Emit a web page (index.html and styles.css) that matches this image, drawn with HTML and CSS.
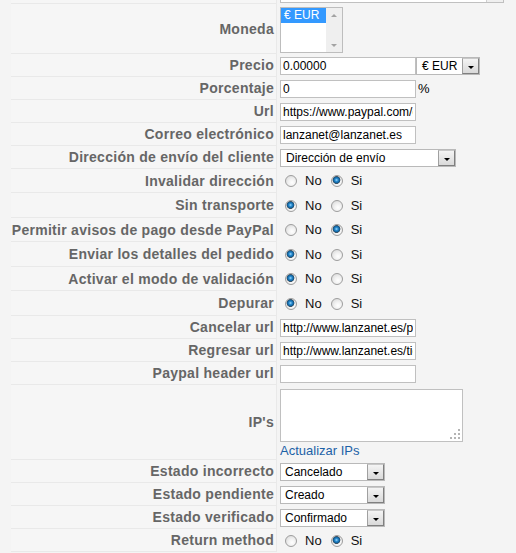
FILE: index.html
```html
<!DOCTYPE html>
<html lang="es">

<head>
    <meta charset="UTF-8">
    <meta name="viewport" content="width=device-width, initial-scale=1.0">
    <title>PayPal - Parámetros</title>
    <link rel="stylesheet" href="styles.css">
</head>

<body>

    <div class="admintable">

        <div class="row r-top">
            <div class="key"></div>
            <div class="val"><div class="cut-select"><span class="cut-btn"></span></div></div>
        </div>

        <div class="row r-moneda">
            <div class="key">Moneda</div>
            <div class="val">
                <div class="listbox">
                    <div class="lb-opts"><div class="lb-opt sel">€ EUR</div></div>
                    <div class="lb-scroll"><span class="up"></span><span class="down"></span></div>
                </div>
            </div>
        </div>

        <div class="row">
            <div class="key">Precio</div>
            <div class="val">
                <input class="text" type="text" value="0.00000">
                <div class="select s-cur"><span class="s-text">€ EUR</span><span class="dd"></span></div>
            </div>
        </div>

        <div class="row">
            <div class="key">Porcentaje</div>
            <div class="val"><input class="text" type="text" value="0"><span class="unit">%</span></div>
        </div>

        <div class="row">
            <div class="key">Url</div>
            <div class="val"><input class="text" type="text" value="https://www.paypal.com/cgi-bin/webscr"></div>
        </div>

        <div class="row">
            <div class="key">Correo electrónico</div>
            <div class="val"><input class="text" type="text" value="lanzanet@lanzanet.es"></div>
        </div>

        <div class="row">
            <div class="key">Dirección de envío del cliente</div>
            <div class="val"><div class="select s-dir"><span class="s-text">Dirección de envío</span><span class="dd"></span></div></div>
        </div>

        <div class="row r-radio r24">
            <div class="key">Invalidar dirección</div>
            <div class="val">
                <label class="opt"><input type="radio" name="r1"> No</label>
                <label class="opt"><input type="radio" name="r1" checked> Si</label>
            </div>
        </div>

        <div class="row r-radio r25">
            <div class="key">Sin transporte</div>
            <div class="val">
                <label class="opt"><input type="radio" name="r2" checked> No</label>
                <label class="opt"><input type="radio" name="r2"> Si</label>
            </div>
        </div>

        <div class="row r-radio r24">
            <div class="key">Permitir avisos de pago desde PayPal</div>
            <div class="val">
                <label class="opt"><input type="radio" name="r3"> No</label>
                <label class="opt"><input type="radio" name="r3" checked> Si</label>
            </div>
        </div>

        <div class="row r-radio r25">
            <div class="key">Enviar los detalles del pedido</div>
            <div class="val">
                <label class="opt"><input type="radio" name="r4" checked> No</label>
                <label class="opt"><input type="radio" name="r4"> Si</label>
            </div>
        </div>

        <div class="row r-radio r24">
            <div class="key">Activar el modo de validación</div>
            <div class="val">
                <label class="opt"><input type="radio" name="r5" checked> No</label>
                <label class="opt"><input type="radio" name="r5"> Si</label>
            </div>
        </div>

        <div class="row r-radio r25">
            <div class="key">Depurar</div>
            <div class="val">
                <label class="opt"><input type="radio" name="r6" checked> No</label>
                <label class="opt"><input type="radio" name="r6"> Si</label>
            </div>
        </div>

        <div class="row">
            <div class="key">Cancelar url</div>
            <div class="val"><input class="text" type="text" value="http://www.lanzanet.es/pago-cancelado"></div>
        </div>

        <div class="row">
            <div class="key">Regresar url</div>
            <div class="val"><input class="text" type="text" value="http://www.lanzanet.es/tienda"></div>
        </div>

        <div class="row">
            <div class="key">Paypal header url</div>
            <div class="val"><input class="text" type="text" value=""></div>
        </div>

        <div class="row r-ips">
            <div class="key">IP's</div>
            <div class="val">
                <div class="ta-wrap">
                    <textarea class="ips"></textarea>
                    <svg class="grip" width="11" height="11" viewBox="0 0 11 11">
                        <rect x="8" y="0" width="2" height="2" fill="#b4b4b4"/>
                        <rect x="4" y="4" width="2" height="2" fill="#b4b4b4"/>
                        <rect x="8" y="4" width="2" height="2" fill="#b4b4b4"/>
                        <rect x="0" y="8" width="2" height="2" fill="#b4b4b4"/>
                        <rect x="4" y="8" width="2" height="2" fill="#b4b4b4"/>
                        <rect x="8" y="8" width="2" height="2" fill="#b4b4b4"/>
                    </svg>
                </div>
                <a class="link" href="#">Actualizar IPs</a>
            </div>
        </div>

        <div class="row">
            <div class="key">Estado incorrecto</div>
            <div class="val"><div class="select s-est"><span class="s-text">Cancelado</span><span class="dd"></span></div></div>
        </div>

        <div class="row">
            <div class="key">Estado pendiente</div>
            <div class="val"><div class="select s-est"><span class="s-text">Creado</span><span class="dd"></span></div></div>
        </div>

        <div class="row">
            <div class="key">Estado verificado</div>
            <div class="val"><div class="select s-est"><span class="s-text">Confirmado</span><span class="dd"></span></div></div>
        </div>

        <div class="row r-radio">
            <div class="key">Return method</div>
            <div class="val">
                <label class="opt"><input type="radio" name="r7"> No</label>
                <label class="opt"><input type="radio" name="r7" checked> Si</label>
            </div>
        </div>

    </div>

</body>

</html>
```

FILE: styles.css
```css
body { margin: 0; background: #f4f4f4; font-family: "Liberation Sans", Arial, sans-serif; font-size: 13px; color: #000; }
.admintable { margin-left: 11px; width: 505px; }
.row { display: grid; grid-template-columns: 266px 1fr; height: 23px; }
.row .key { box-sizing: border-box; display: flex; align-items: center; justify-content: flex-end; padding-right: 2px; background: #f6f6f6; border-right: 1px solid #e9e9e9; border-bottom: 1px solid #e9e9e9; color: #666; font-size: 14px; font-weight: bold; letter-spacing: 0.28px; white-space: nowrap; }
.row .val { display: flex; align-items: flex-start; padding: 3px 0 0 3px; min-width: 0; }
.r-top { height: 4px; }
.r-top .val { padding-top: 0; }
.r-moneda { height: 50px; }
.r24 { height: 24px; }
.r25 { height: 25px; }
.r-ips { height: 75px; }
.r-ips .val { flex-direction: column; }

.text { box-sizing: border-box; width: 136px; height: 18px; margin: 0; padding: 0 2px; border: 1px solid #c0c0c0; background: #fff; font: 12px "Liberation Sans", Arial, sans-serif; color: #000; outline: none; }
.unit { margin-left: 2px; line-height: 18px; }

.select { box-sizing: border-box; display: flex; height: 18px; border: 1px solid #b9b9b9; background: #fff; font-size: 12px; }
.select .s-text { flex: 1; padding-left: 4px; line-height: 16px; white-space: nowrap; overflow: hidden; }
.select .dd { box-sizing: border-box; display: flex; justify-content: center; align-items: center; width: 17px; height: 16px; background: linear-gradient(#f4f4f4, #d9d9d9); border: 1px solid #7f7f7f; border-top-color: #c8c8c8; border-left-color: #a0a0a0; }
.select .dd::after { content: ""; margin-top: 3px; border-left: 3px solid transparent; border-right: 3px solid transparent; border-top: 3px solid #000; }
.s-cur { width: 64px; }
.s-cur .s-text { padding-left: 5px; }
.s-dir { width: 176px; }
.s-dir .s-text { padding-left: 5px; }
.s-est { width: 105px; }

.cut-select { box-sizing: border-box; display: flex; justify-content: flex-end; width: 224px; height: 3px; border: 1px solid #c0c0c0; border-top: none; background: #fff; }
.cut-btn { width: 16px; height: 2px; background: #efefef; border-left: 1px solid #cfcfcf; }

.listbox { box-sizing: border-box; display: flex; width: 63px; height: 46px; border: 1px solid #bdbdbd; background: #fff; font-size: 12px; }
.lb-opts { flex: 1; }
.lb-opt { height: 15px; line-height: 15px; padding-left: 3px; white-space: nowrap; }
.lb-opt.sel { background: #3399ff; color: #fff; }
.lb-scroll { display: flex; flex-direction: column; justify-content: space-between; align-items: center; width: 16px; padding: 6px 0 5px; box-sizing: border-box; background: #efefef; }
.lb-scroll .up { border-left: 3px solid transparent; border-right: 3px solid transparent; border-bottom: 3px solid #a3a3a3; }
.lb-scroll .down { border-left: 3px solid transparent; border-right: 3px solid transparent; border-top: 3px solid #a3a3a3; }

.r-radio .val { align-items: center; padding-top: 0; }
.opt { display: inline-flex; align-items: center; color: #111; line-height: 16px; }
.opt + .opt { margin-left: 4px; }
.opt input { -webkit-appearance: none; appearance: none; box-sizing: border-box; width: 12px; height: 12px; margin: 0 8px 0 5px; border: 1px solid #9d9d9d; border-radius: 50%; background: radial-gradient(circle at 60% 65%, #ffffff 0, #f1f1f1 40%, #d3d3d3 100%); }
.opt input:checked { background: radial-gradient(circle at 45% 40%, #9fdcff 0, #2a8cd0 1.5px, #0f5f99 3px, #3a4f60 3.6px, transparent 4.2px), radial-gradient(circle at 60% 65%, #ffffff 0, #f1f1f1 40%, #d3d3d3 100%); }

.ta-wrap { position: relative; margin-top: 1px; }
.ips { display: block; box-sizing: border-box; width: 183px; height: 53px; margin: 0; border: 1px solid #c0c0c0; background: #fff; resize: none; outline: none; }
.grip { position: absolute; right: 2px; bottom: 2px; }
.link { color: #1d62a7; text-decoration: none; line-height: 17px; }
```
